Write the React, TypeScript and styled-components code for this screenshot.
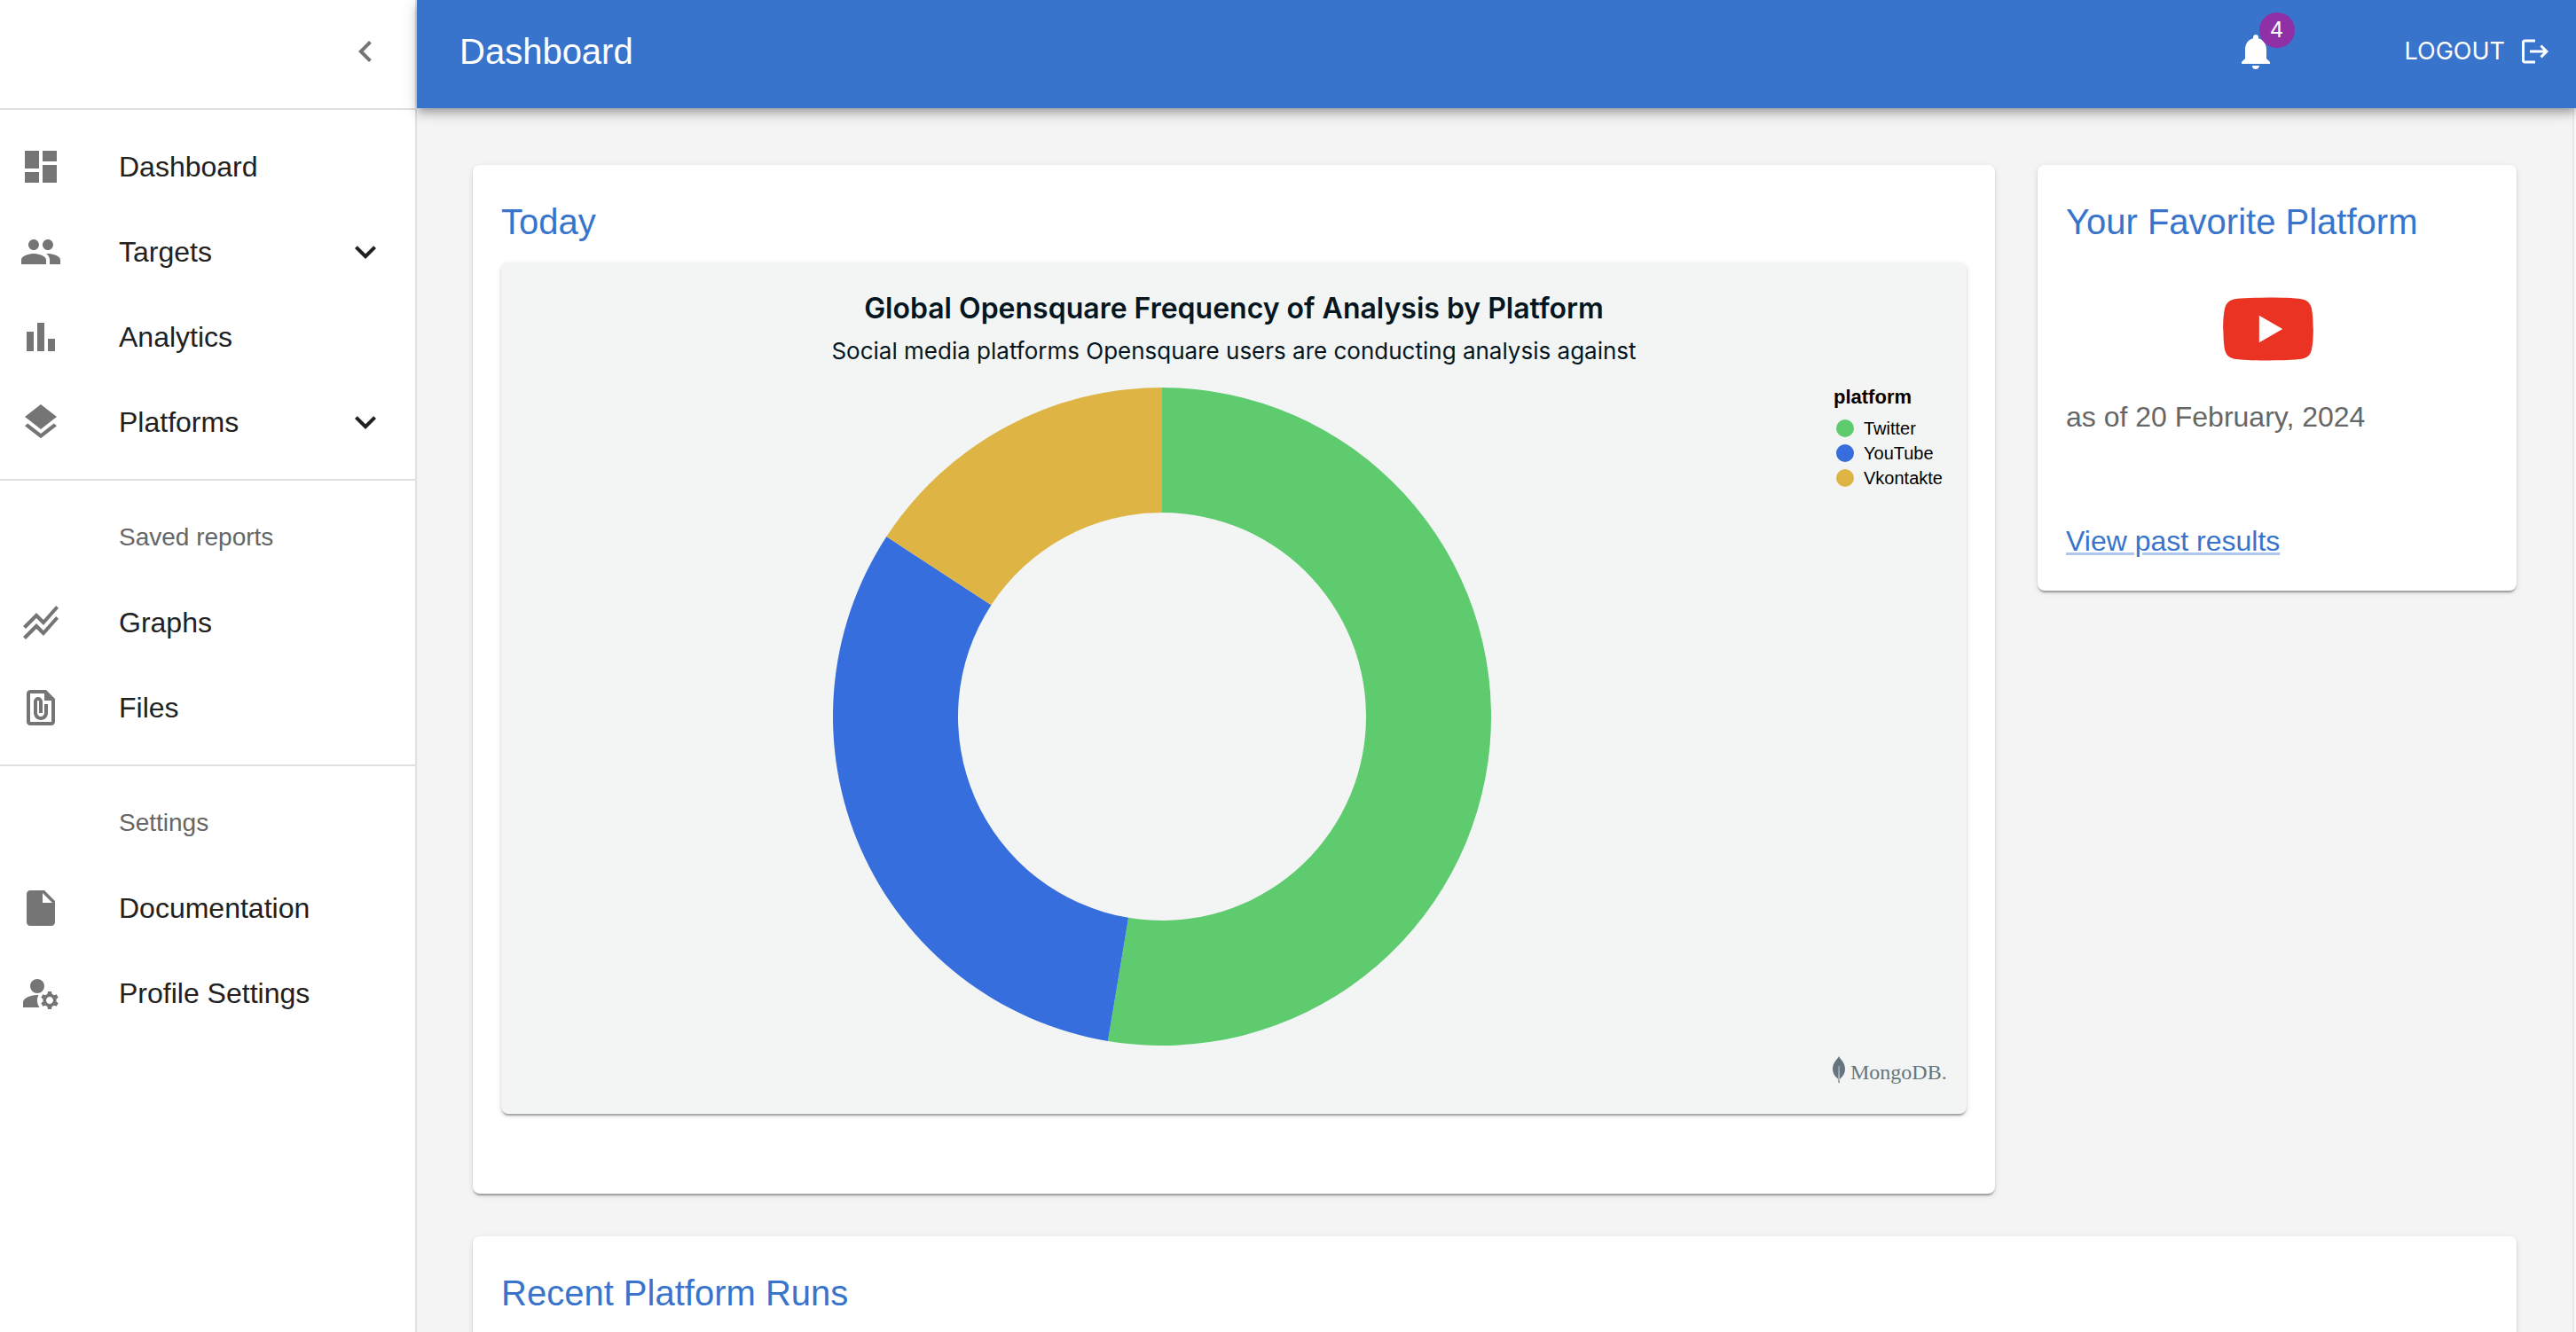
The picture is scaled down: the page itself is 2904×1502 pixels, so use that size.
import React from 'react';
import styled, { createGlobalStyle } from 'styled-components';
import type { IconType } from 'react-icons';
import {
  MdChevronLeft,
  MdDashboard,
  MdExpandMore,
  MdFilePresent,
  MdInsertDriveFile,
  MdLayers,
  MdLogout,
  MdManageAccounts,
  MdNotifications,
  MdPeople,
  MdStackedLineChart,
} from 'react-icons/md';

const color = {
  primary: '#3874cb',
  secondary: '#8f30a7',
  text: '#212121',
  muted: '#666666',
  icon: '#757575',
  divider: '#e0e0e0',
  page: '#f4f4f4',
  chart: '#f2f5f4',
  chartText: '#061621',
  brand: '#66757d',
  youtube: '#ea3323',
};

const sans = '"Liberation Sans", Arial, Helvetica, sans-serif';
const cardShadow =
  '0 4px 2px -2px rgba(0, 0, 0, 0.2), 0 2px 2px 0 rgba(0, 0, 0, 0.14), 0 2px 6px 0 rgba(0, 0, 0, 0.12)';

const GlobalStyle = createGlobalStyle`
  *, *::before, *::after { box-sizing: border-box; }
  body {
    margin: 0;
    color: ${color.text};
    background: ${color.page};
    font-family: ${sans};
    font-size: 32px;
    line-height: 48px;
  }
  h1, h2, h3, p, ul { margin: 0; padding: 0; font-weight: 400; }
  ul { list-style: none; }
  button { border: 0; background: none; color: inherit; cursor: pointer; }
  svg { display: block; flex-shrink: 0; }
`;

const Shell = styled.div`
  display: flex;
  height: 100vh;
  overflow: hidden;
`;

const Sidebar = styled.aside`
  flex: 0 0 470px;
  background: #fff;
  border-right: 2px solid ${color.divider};
`;

const SidebarTop = styled.div`
  display: flex;
  align-items: center;
  justify-content: flex-end;
  height: 124px;
  padding: 0 32px 6px 0;
  border-bottom: 2px solid ${color.divider};
`;

const CollapseButton = styled.button`
  padding: 0;
  color: ${color.icon};
  font-size: 48px;
`;

const NavSection = styled.section`
  padding: 16px 0;

  & + & {
    border-top: 2px solid ${color.divider};
  }
`;

const NavHeading = styled.h2`
  padding-left: 134px;
  color: ${color.muted};
  font-size: 28px;
  line-height: 96px;
`;

const NavRow = styled.a`
  display: flex;
  align-items: center;
  width: 100%;
  height: 96px;
  padding: 0 32px 0 22px;
  color: ${color.text};
  font: 400 32px/48px ${sans};
  text-align: left;
  text-decoration: none;
`;

const NavIcon = styled.span`
  width: 112px;
  color: ${color.icon};
  font-size: 48px;
`;

const NavLabel = styled.span`
  flex: 1;
`;

const NavArrow = styled.span`
  font-size: 48px;
`;

const Content = styled.div`
  display: flex;
  flex: 1;
  flex-direction: column;
  min-width: 0;
`;

const AppBar = styled.header`
  position: relative;
  z-index: 1;
  display: flex;
  flex-shrink: 0;
  align-items: center;
  height: 122px;
  padding: 0 28px 6px 48px;
  color: #fff;
  background: ${color.primary};
  box-shadow: 0 4px 8px -2px rgba(0, 0, 0, 0.2), 0 8px 10px 0 rgba(0, 0, 0, 0.14),
    0 2px 20px 0 rgba(0, 0, 0, 0.12);
`;

const AppTitle = styled.h1`
  flex: 1;
  font-size: 40px;
  line-height: 64px;
`;

const BellButton = styled.button`
  position: relative;
  margin-right: 144px;
  padding: 0;
  color: inherit;
  font-size: 48px;
`;

const Badge = styled.span`
  position: absolute;
  top: -20px;
  right: -20px;
  width: 40px;
  height: 40px;
  border-radius: 20px;
  background: ${color.secondary};
  font: 400 24px/40px Inter, sans-serif;
  text-align: center;
`;

const LogoutButton = styled.button`
  display: flex;
  align-items: center;
  gap: 16px;
  padding: 0;
  font: 400 27px/48px Inter, sans-serif;

  svg {
    font-size: 36px;
  }
`;

const Scroller = styled.div`
  display: flex;
  flex: 1;
  min-height: 0;
`;

const Main = styled.main`
  flex: 1;
  min-width: 0;
  overflow: hidden;
`;

const ScrollTrack = styled.div`
  width: 4px;
  border-left: 2px solid #e8e8e8;
  background: #fafafa;
`;

const Container = styled.div`
  display: grid;
  grid-template-columns: repeat(12, minmax(0, 1fr));
  gap: 48px;
  align-items: start;
  max-width: 2400px;
  margin: 0 auto;
  padding: 64px 48px;
`;

const Card = styled.section<{ $span: number; $minHeight?: number }>`
  display: flex;
  flex-direction: column;
  grid-column: span ${(p) => p.$span};
  min-height: ${(p) => p.$minHeight ?? 0}px;
  padding: 32px;
  border-radius: 8px;
  background: #fff;
  box-shadow: ${cardShadow};
`;

const CardTitle = styled.h2`
  margin-bottom: 14px;
  color: ${color.primary};
  font-size: 40px;
  line-height: 64px;
`;

const ChartPanel = styled.figure`
  display: flex;
  flex-direction: column;
  margin: 0 0 58px;
  padding: 32px 24px 29px;
  border-radius: 8px;
  background: ${color.chart};
  box-shadow: ${cardShadow};
`;

const ChartTitle = styled.h3`
  margin-bottom: 12px;
  color: ${color.chartText};
  font: 600 32px/40px Inter, sans-serif;
  text-align: center;
`;

const ChartSubtitle = styled.p`
  margin-bottom: 25px;
  color: ${color.chartText};
  font: 400 26px/32px Inter, sans-serif;
  text-align: center;
`;

const ChartBody = styled.div`
  display: flex;
  gap: 36px;
`;

const ChartPlot = styled.div`
  display: flex;
  flex: 1;
  justify-content: center;
  min-width: 0;
`;

const Legend = styled.div`
  width: 126px;
  color: #000;
`;

const LegendTitle = styled.h4`
  margin: 0 0 10px;
  font-size: 22px;
  font-weight: 700;
  line-height: 22px;
`;

const LegendItem = styled.li`
  display: flex;
  align-items: center;
  gap: 11px;
  padding-left: 3px;
  font-size: 20px;
  line-height: 28px;
`;

const Swatch = styled.span<{ $color: string }>`
  width: 20px;
  height: 20px;
  border-radius: 50%;
  background: ${(p) => p.$color};
`;

const ChartCredit = styled.figcaption`
  display: flex;
  align-items: flex-start;
  align-self: flex-end;
  gap: 6px;
  width: 127px;
  margin-top: 12px;
  color: ${color.brand};
  font: 400 24px/36px "Liberation Serif", "Times New Roman", serif;
`;

const PlatformLogo = styled.svg`
  width: 122px;
  height: 122px;
  margin: 14px 0 14px 35%;
`;

const AsOf = styled.p`
  flex: 1;
  color: ${color.muted};
`;

const ResultsLink = styled.a`
  align-self: flex-start;
  color: ${color.primary};
  text-decoration: underline rgba(56, 116, 203, 0.4) 3px;
`;

/* Bars with a solid square cut, filling sixteen units of the grid. */
const BarChartIcon: IconType = () => (
  <svg viewBox="0 0 24 24" width="1em" height="1em" fill="currentColor" aria-hidden="true">
    <path d="M4 9h4v11H4zm12 4h4v7h-4zm-6-9h4v16h-4z" />
  </svg>
);

const platforms = [
  { name: 'Twitter', value: 10, fill: '#5fcb6f' },
  { name: 'YouTube', value: 6, fill: '#366edd' },
  { name: 'Vkontakte', value: 3, fill: '#deb444' },
];

function Donut({ outer = 371, inner = 230 }: { outer?: number; inner?: number }) {
  const total = platforms.reduce((sum, p) => sum + p.value, 0);
  const point = (r: number, share: number) => {
    const a = (share / total) * Math.PI * 2;
    return `${(outer + r * Math.sin(a)).toFixed(2)} ${(outer - r * Math.cos(a)).toFixed(2)}`;
  };
  let start = 0;
  return (
    <svg
      width={outer * 2}
      viewBox={`0 0 ${outer * 2} ${outer * 2}`}
      role="img"
      aria-label="Share of analyses by platform"
    >
      {platforms.map((p) => {
        const from = start;
        const to = start + p.value;
        start = to;
        const large = p.value / total > 0.5 ? 1 : 0;
        return (
          <path
            key={p.name}
            fill={p.fill}
            d={`M${point(outer, from)}A${outer} ${outer} 0 ${large} 1 ${point(outer, to)}L${point(
              inner,
              to,
            )}A${inner} ${inner} 0 ${large} 0 ${point(inner, from)}Z`}
          />
        );
      })}
    </svg>
  );
}

type NavEntry = { label: string; icon: IconType; expandable?: boolean };

const sections: { heading?: string; items: NavEntry[] }[] = [
  {
    items: [
      { label: 'Dashboard', icon: MdDashboard },
      { label: 'Targets', icon: MdPeople, expandable: true },
      { label: 'Analytics', icon: BarChartIcon },
      { label: 'Platforms', icon: MdLayers, expandable: true },
    ],
  },
  {
    heading: 'Saved reports',
    items: [
      { label: 'Graphs', icon: MdStackedLineChart },
      { label: 'Files', icon: MdFilePresent },
    ],
  },
  {
    heading: 'Settings',
    items: [
      { label: 'Documentation', icon: MdInsertDriveFile },
      { label: 'Profile Settings', icon: MdManageAccounts },
    ],
  },
];

function NavItem({ label, icon: Icon, expandable }: NavEntry) {
  const inner = (
    <>
      <NavIcon>
        <Icon />
      </NavIcon>
      <NavLabel>{label}</NavLabel>
      {expandable && (
        <NavArrow>
          <MdExpandMore />
        </NavArrow>
      )}
    </>
  );
  return (
    <li>
      {expandable ? (
        <NavRow as="button" type="button" aria-expanded={false}>
          {inner}
        </NavRow>
      ) : (
        <NavRow href="#">{inner}</NavRow>
      )}
    </li>
  );
}

export default function App() {
  return (
    <>
      <GlobalStyle />
      <Shell>
        <Sidebar>
          <SidebarTop>
            <CollapseButton type="button" aria-label="Collapse menu">
              <MdChevronLeft />
            </CollapseButton>
          </SidebarTop>
          <nav>
            {sections.map((s, i) => (
              <NavSection key={i}>
                {s.heading && <NavHeading>{s.heading}</NavHeading>}
                <ul>
                  {s.items.map((item) => (
                    <NavItem key={item.label} {...item} />
                  ))}
                </ul>
              </NavSection>
            ))}
          </nav>
        </Sidebar>

        <Content>
          <AppBar>
            <AppTitle>Dashboard</AppTitle>
            <BellButton type="button" aria-label="Notifications">
              <MdNotifications />
              <Badge>4</Badge>
            </BellButton>
            <LogoutButton type="button">
              LOGOUT
              <MdLogout />
            </LogoutButton>
          </AppBar>

          <Scroller>
            <Main>
              <Container>
                <Card $span={9}>
                  <CardTitle>Today</CardTitle>
                  <ChartPanel>
                    <ChartTitle>Global Opensquare Frequency of Analysis by Platform</ChartTitle>
                    <ChartSubtitle>
                      Social media platforms Opensquare users are conducting analysis against
                    </ChartSubtitle>
                    <ChartBody>
                      <ChartPlot>
                        <Donut />
                      </ChartPlot>
                      <Legend>
                        <LegendTitle>platform</LegendTitle>
                        <ul>
                          {platforms.map((p) => (
                            <LegendItem key={p.name}>
                              <Swatch $color={p.fill} />
                              {p.name}
                            </LegendItem>
                          ))}
                        </ul>
                      </Legend>
                    </ChartBody>
                    <ChartCredit>
                      <svg width="14" height="30" viewBox="0 0 14 30" aria-hidden="true">
                        <path
                          fill={color.brand}
                          d="M7 0c.7 1.7 2.200 3.200 3.600 5.100C12.800 8 14 11.200 14 14.500c0 4.600-2.200 8.200-5.900 11.200L7.800 30H6.400l-.3-4.300C2.300 22.800 0 19 0 14.500 0 11.200 1.200 8 3.400 5.100 4.800 3.200 6.300 1.700 7 0z"
                        />
                        <path fill="#b9c2c3" d="M6.600 11h1l.3 14.500-.4 3.500H6.700l-.4-3.500z" />
                      </svg>
                      MongoDB.
                    </ChartCredit>
                  </ChartPanel>
                </Card>

                <Card $span={3} $minHeight={480}>
                  <CardTitle>Your Favorite Platform</CardTitle>
                  <PlatformLogo viewBox="0 0 24 24" role="img" aria-label="YouTube">
                    <path
                      fill={color.youtube}
                      d="M10 15l5.190-3L10 9v6m11.560-7.830c.13.47.22 1.100.28 1.900.07.8.1 1.490.1 2.090L22 12c0 2.190-.16 3.800-.44 4.830-.25.9-.83 1.480-1.730 1.730-.47.13-1.330.22-2.650.28-1.300.07-2.490.1-3.590.1L12 19c-4.190 0-6.800-.16-7.830-.44-.9-.25-1.480-.83-1.730-1.730-.13-.47-.22-1.100-.28-1.900-.07-.8-.1-1.490-.1-2.090L2 12c0-2.190.16-3.800.44-4.830.25-.9.83-1.480 1.730-1.730.47-.13 1.330-.22 2.650-.28 1.300-.07 2.490-.1 3.590-.1L12 5c4.190 0 6.800.16 7.830.44.9.25 1.480.83 1.730 1.730z"
                    />
                  </PlatformLogo>
                  <AsOf>as of 20 February, 2024</AsOf>
                  <ResultsLink href="#">View past results</ResultsLink>
                </Card>

                <Card $span={12} $minHeight={480}>
                  <CardTitle>Recent Platform Runs</CardTitle>
                </Card>
              </Container>
            </Main>
            <ScrollTrack />
          </Scroller>
        </Content>
      </Shell>
    </>
  );
}
